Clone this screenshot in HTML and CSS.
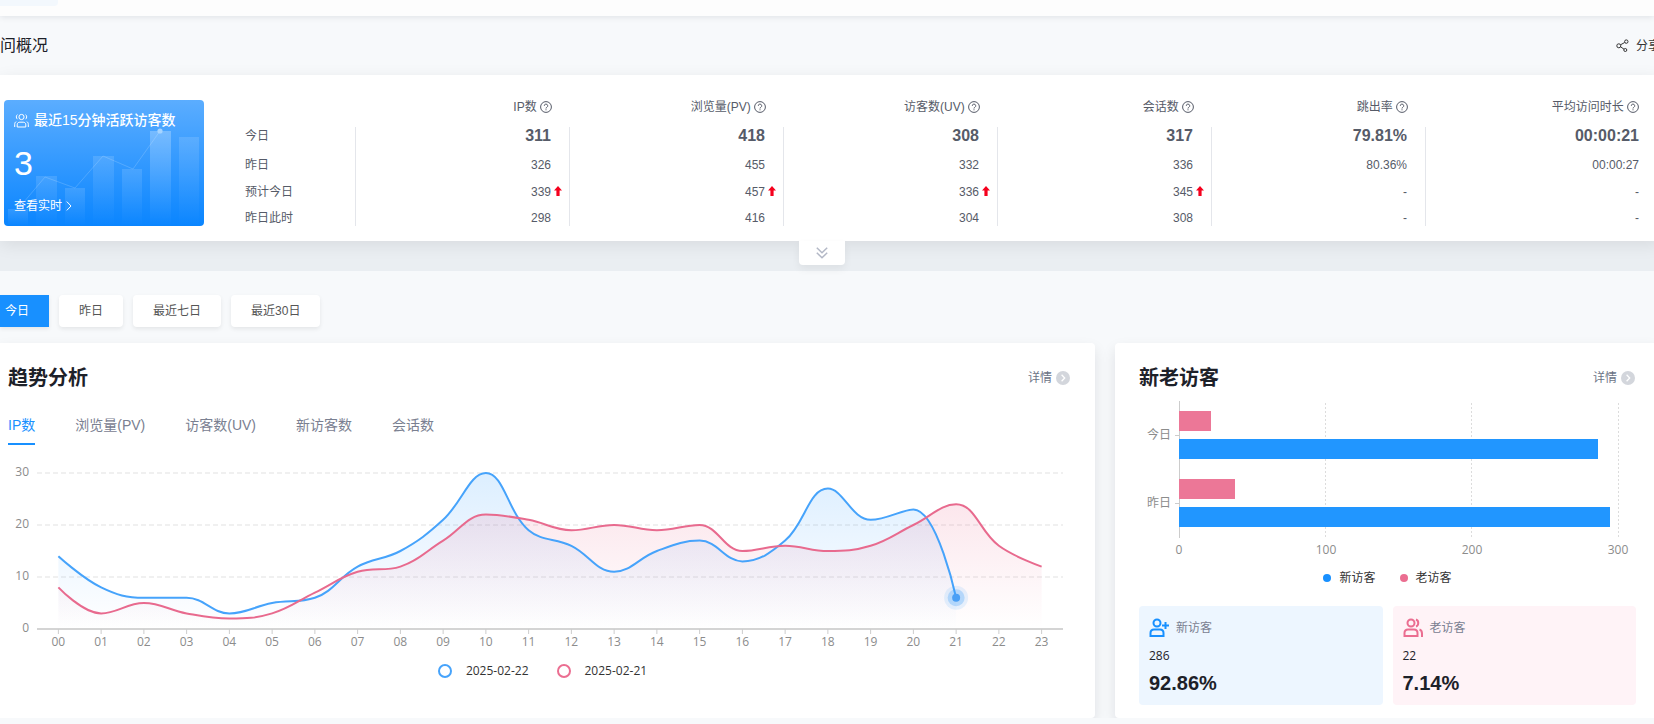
FILE: index.html
```html
<!DOCTYPE html>
<html lang="zh-CN">
<head>
<meta charset="utf-8">
<title>访问概况</title>
<link rel="stylesheet" href="styles.css">
</head>
<body>
<svg class="defs" aria-hidden="true">
  <symbol id="help" viewBox="0 0 12 12"><circle cx="6" cy="6" r="5.4" fill="none" stroke="currentColor"/><path d="M4.3 4.8a1.7 1.7 0 1 1 2.5 1.5c-.6.3-.8.6-.8 1.2M6 8.3v1" fill="none" stroke="currentColor"/></symbol>
  <symbol id="up" viewBox="0 0 8 10"><path d="M4 0l4 4.6H5.6V10H2.4V4.6H0z" fill="#f5001d"/></symbol>
  <symbol id="more" viewBox="0 0 14 14"><circle cx="7" cy="7" r="7" fill="#d3d6dc"/><path d="M5.6 3.8L8.700 7l-3.100 3.200" fill="none" stroke="#fff" stroke-width="1.3"/></symbol>
</svg>
<div class="topbar"><div class="topbar-tab"></div></div>
<div class="page">
  <header class="head">
    <h1>问概况</h1>
    <button class="share" type="button">
      <svg width="13" height="13" viewBox="0 0 13 13" fill="none" stroke="currentColor"><circle cx="2.8" cy="6.8" r="2"/><circle cx="10.3" cy="2.6" r="1.7"/><circle cx="9.3" cy="11" r="1.5"/><path d="M4.5 5.8l4.2-2.3M4.6 7.8l3.4 2.4"/></svg>
      <span>分享</span>
    </button>
  </header>
  <section class="summary">
    <div class="live">
      <svg class="live-bg" viewBox="0 0 200 126" preserveAspectRatio="none" aria-hidden="true">
        <defs><linearGradient id="lb" x1="0" y1="0" x2="0" y2="1"><stop offset="0" stop-color="#fff" stop-opacity=".13"/><stop offset="1" stop-color="#fff" stop-opacity="0"/></linearGradient>
        <linearGradient id="lb2" x1="0" y1="0" x2="0" y2="1"><stop offset="0" stop-color="#fff" stop-opacity=".26"/><stop offset="1" stop-color="#fff" stop-opacity="0"/></linearGradient></defs>
        <g fill="url(#lb)"><path d="M4 109h20v17H4z"/><path d="M32 76h21v50H32z"/><path d="M61 88h20v38H61z"/><path d="M89 56h21v70H89z"/><path d="M118 69h20v57h-20z"/><path d="M175 37h20v89h-20z"/></g>
        <path d="M146 31h21v95h-21z" fill="url(#lb2)"/>
        <path d="M14 109L41 77l30 11 28-32 30 13 27-38" fill="none" stroke="#fff" stroke-opacity=".17"/>
        <circle cx="156" cy="31" r="2.6" fill="#a6d4ff"/>
      </svg>
      <div class="live-title">
        <svg width="15" height="15" viewBox="0 0 15 15" fill="none" stroke="#fff" stroke-width="1"><circle cx="7.5" cy="4" r="2.6"/><path d="M3.2 14v-2.2c0-1.7 1-2.6 2.6-2.6h3.4c1.6 0 2.6.9 2.6 2.6V14zM3.4 1.6a3 3 0 0 0 0 4.6M11.6 1.6a3 3 0 0 1 0 4.6M.7 14v-2.6C.7 10 1.2 9 2.3 8.7M14.3 14v-2.6c0-1.4-.5-2.4-1.6-2.7"/></svg>
        <span>最近15分钟活跃访客数</span>
      </div>
      <div class="live-num">3</div>
      <a class="live-link" href="#">查看实时<svg width="6" height="10" viewBox="0 0 6 10" fill="none" stroke="#fff"><path d="M.8.6L5 5 .8 9.4"/></svg></a>
    </div>
    <table class="stats">
      <thead><tr><th scope="col"></th>
        <th scope="col">IP数 <svg class="help"><use href="#help"/></svg></th>
        <th scope="col">浏览量(PV) <svg class="help"><use href="#help"/></svg></th>
        <th scope="col">访客数(UV) <svg class="help"><use href="#help"/></svg></th>
        <th scope="col">会话数 <svg class="help"><use href="#help"/></svg></th>
        <th scope="col">跳出率 <svg class="help"><use href="#help"/></svg></th>
        <th scope="col">平均访问时长 <svg class="help"><use href="#help"/></svg></th></tr></thead>
      <tbody>
        <tr class="today"><th scope="row">今日</th><td>311</td><td>418</td><td>308</td><td>317</td><td>79.81%</td><td>00:00:21</td></tr>
        <tr><th scope="row">昨日</th><td>326</td><td>455</td><td>332</td><td>336</td><td>80.36%</td><td>00:00:27</td></tr>
        <tr><th scope="row">预计今日</th><td>339<svg class="up"><use href="#up"/></svg></td><td>457<svg class="up"><use href="#up"/></svg></td><td>336<svg class="up"><use href="#up"/></svg></td><td>345<svg class="up"><use href="#up"/></svg></td><td>-</td><td>-</td></tr>
        <tr class="last"><th scope="row">昨日此时</th><td>298</td><td>416</td><td>304</td><td>308</td><td>-</td><td>-</td></tr>
      </tbody>
    </table>
  </section>
  <div class="band">
    <button class="expand" type="button" aria-label="展开"><svg width="12" height="12" viewBox="0 0 12 12" fill="none" stroke="#b3b8c6" stroke-width="1.5"><path d="M.8.8L6 5.8 11.2.8M.8 5.8L6 10.8l5.2-5"/></svg></button>
  </div>
  <nav class="ranges">
    <button class="range active" type="button">今日</button>
    <button class="range" type="button">昨日</button>
    <button class="range" type="button">最近七日</button>
    <button class="range" type="button">最近30日</button>
  </nav>
  <main class="cards">
    <section class="card trend">
      <div class="card-head"><h2>趋势分析</h2><a class="more" href="#">详情<svg><use href="#more"/></svg></a></div>
      <div class="tabs">
        <button class="tab active" type="button">IP数</button>
        <button class="tab" type="button">浏览量(PV)</button>
        <button class="tab" type="button">访客数(UV)</button>
        <button class="tab" type="button">新访客数</button>
        <button class="tab" type="button">会话数</button>
      </div>
      <svg class="chart" id="trend" viewBox="0 0 1063 190" role="img" aria-label="趋势分析">
        <defs>
          <linearGradient id="ga" x1="0" y1="0" x2="0" y2="1"><stop offset="0" stop-color="#1890ff" stop-opacity=".15"/><stop offset="1" stop-color="#1890ff" stop-opacity="0"/></linearGradient>
          <linearGradient id="gb" x1="0" y1="0" x2="0" y2="1"><stop offset="0" stop-color="#eb6e91" stop-opacity=".17"/><stop offset="1" stop-color="#eb6e91" stop-opacity="0"/></linearGradient>
        </defs>
      </svg>
      <div class="legend dates">
        <span><i class="ring blue"></i>2025-02-22</span>
        <span><i class="ring pink"></i>2025-02-21</span>
      </div>
    </section>
    <section class="card visitors">
      <div class="card-head"><h2>新老访客</h2><a class="more" href="#">详情<svg><use href="#more"/></svg></a></div>
      <svg class="chart bars" viewBox="0 0 497 163" role="img" aria-label="新老访客">
        <g stroke="#dcdcdc" stroke-dasharray="2 2"><path d="M186.500 8v136M332.500 8v136M479.500 8v136"/></g>
        <path d="M40.500 6v137M36 40.500h5M36 108.500h5" stroke="#ccc" fill="none"/>
        <g fill="#ec7797"><path d="M40 16h32v20H40zM40 84h56v20H40z"/></g>
        <g fill="#2196ff"><path d="M40 44h419v20H40zM40 112h431v20H40z"/></g>
        <g class="axis"><text x="32" y="44" text-anchor="end">今日</text><text x="32" y="112" text-anchor="end">昨日</text></g>
        <g class="axis" text-anchor="middle"><text x="40" y="159">0</text><text x="187" y="159">100</text><text x="333" y="159">200</text><text x="479" y="159">300</text></g>
      </svg>
      <div class="legend kinds">
        <span><i class="dot blue"></i>新访客</span>
        <span><i class="dot pink"></i>老访客</span>
      </div>
      <div class="boxes">
        <div class="box new">
          <div class="box-title"><svg width="20" height="20" viewBox="0 0 20 20" fill="none" stroke="#1890ff" stroke-width="2"><circle cx="8" cy="5" r="3.5"/><path d="M1.500 18v-3c0-2.400 1.200-3.500 3.500-3.500h6c2.300 0 3.500 1.100 3.500 3.500v3zM16.500 4v7M13 7.500h7"/></svg>新访客</div>
          <div class="count">286</div><div class="pct">92.86%</div>
        </div>
        <div class="box old">
          <div class="box-title"><svg width="20" height="20" viewBox="0 0 20 20" fill="none" stroke="#eb6e91" stroke-width="2"><circle cx="8" cy="5" r="3.500"/><path d="M1.500 18v-3c0-2.400 1.200-3.500 3.500-3.500h6c2.300 0 3.500 1.100 3.500 3.500v3zM13 1.500c3 1 3 6 0 7M16.500 11.500c2 .6 2.500 2 2.500 4V19"/></svg>老访客</div>
          <div class="count">22</div><div class="pct">7.14%</div>
        </div>
      </div>
    </section>
  </main>
</div>
<script src="chart.js"></script>
</body>
</html>
```
FILE: styles.css
```css
* { box-sizing: border-box; }
body { margin: 0; background: #f7f9fb; color: #1d2129; font: 12px/18px "Liberation Sans", "Noto Sans CJK SC", sans-serif; overflow: hidden; }
h1, h2 { margin: 0; }
button { border: 0; padding: 0; background: none; font: inherit; color: inherit; }
a { color: inherit; text-decoration: none; }
.defs { position: absolute; width: 0; height: 0; }
.topbar { height: 16px; background: #fdfdfd; box-shadow: 0 1px 6px rgba(0, 21, 41, .1); }
.topbar-tab { width: 58px; height: 6px; background: #f3f8fd; border-radius: 0 0 4px 0; }
.page { margin-right: -6px; }
.head { display: flex; justify-content: space-between; align-items: center; height: 59px; }
.head h1 { font-size: 16px; font-weight: 400; line-height: 24px; }
.share { display: flex; align-items: center; gap: 7px; color: #333; white-space: nowrap; }
.summary { position: relative; display: flex; padding: 25px 20px 15px 4px; background: #fff; box-shadow: 0 4px 16px rgba(0, 0, 0, .08); }
.live { position: relative; flex: none; width: 200px; height: 126px; padding: 10px; border-radius: 4px; background: linear-gradient(#5badff, #0a85ff); color: #fff; overflow: hidden; }
.live-bg { position: absolute; inset: 0; width: 100%; height: 100%; }
.live-title { position: relative; display: flex; align-items: center; gap: 5px; font-size: 14px; font-weight: 500; line-height: 20px; white-space: nowrap; }
.live-num { position: relative; margin: 13px 0; font-size: 34px; line-height: 40px; }
.live-link { position: relative; display: flex; align-items: center; gap: 4px; line-height: 20px; }
.stats { flex: 1; width: 100%; min-width: 0; margin-left: 41px; border-collapse: separate; border-spacing: 0; table-layout: fixed; color: #565b68; line-height: 16px; }
.stats th { font-weight: 400; text-align: left; }
.stats th, .stats td { position: relative; height: 27px; padding: 0; vertical-align: middle; }
.stats tr > :first-child { width: 111px; }
.stats thead th { padding: 0 18px 13px 0; line-height: 12px; text-align: right; white-space: nowrap; }
.stats td { padding-right: 18px; text-align: right; }
.stats tbody tr > * { border-right: 1px solid #e4e6eb; }
.stats tbody tr > :last-child { border-right: 0; padding-right: 1px; }
.stats thead tr > :last-child { padding-right: 1px; }
.stats .today > * { height: 24px; padding-bottom: 6px; }
.stats .today td { font-size: 16px; font-weight: 700; }
.stats .last > * { height: 21px; padding-top: 5px; }
.help { width: 12px; height: 12px; vertical-align: -2px; }
.up { position: absolute; right: 7px; top: 8px; width: 8px; height: 10px; }
.band { display: flex; justify-content: center; height: 30px; background: #eaeef2; }
.expand { position: relative; display: flex; align-items: center; justify-content: center; width: 46px; height: 24px; margin-right: 16px; background: #fff; border-radius: 0 0 4px 4px; box-shadow: 0 4px 8px rgba(0, 0, 0, .06); }
.ranges { display: flex; gap: 10px; padding: 24px 0 16px; }
.range { height: 32px; padding: 0 20px; background: #fff; border-radius: 4px; color: #555; box-shadow: 0 2px 4px rgba(0, 0, 0, .08); }
.range.active { padding-left: 5px; border-radius: 0; background: #1890ff; color: #fff; }
.cards { display: grid; grid-template-columns: minmax(0, 1fr) minmax(0, 545px); gap: 20px; }
.card { background: #fff; border-radius: 4px; box-shadow: 0 6px 14px rgba(0, 20, 30, .1); padding: 20px 24px 13px; }
.trend { padding-left: 8px; border-radius: 0 4px 4px 0; }
.card-head { display: flex; justify-content: space-between; align-items: center; height: 30px; }
.card-head h2 { font-size: 20px; line-height: 30px; font-weight: 700; }
.more { display: flex; align-items: center; gap: 4px; padding-right: 1px; color: #6b7385; }
.more svg { width: 14px; height: 14px; }
.tabs { display: flex; gap: 40px; margin-top: 22px; }
.tab { height: 30px; padding-bottom: 7px; border-bottom: 2px solid transparent; color: #7a8091; font-size: 14px; line-height: 21px; }
.tab.active { border-color: #1890ff; color: #1890ff; }
.chart { display: block; width: 100%; height: auto; overflow: visible; }
.trend .chart { margin-top: 18px; }
.axis text { font: 12px "Open Sans", "Noto Sans CJK SC", sans-serif; fill: #8c8c8c; }
.legend { display: flex; justify-content: center; color: #333; font-family: "Open Sans", "Noto Sans CJK SC", sans-serif; line-height: 18px; }
.legend span { display: flex; align-items: center; }
.dates { gap: 28px; margin: 9px 0 0 6px; }
.dates span { gap: 14px; }
.ring { width: 14px; height: 14px; border: 2px solid; border-radius: 50%; }
.ring.blue { border-color: #46a3fb; }
.ring.pink { border-color: #eb6e91; }
.bars { margin-top: 2px; }
.kinds { gap: 24px; margin: 11px 0 19px; }
.kinds span { gap: 8px; }
.dot { width: 8px; height: 8px; border-radius: 50%; }
.dot.blue { background: #1890ff; }
.dot.pink { background: #eb6e91; }
.boxes { display: grid; grid-template-columns: 1fr 1fr; gap: 10px; }
.box { padding: 12px 10px; height: 99px; border-radius: 4px; }
.new { background: #edf6ff; }
.old { background: #fff3f7; }
.box-title { display: flex; align-items: center; gap: 7px; height: 20px; color: #7a8091; }
.count { margin-top: 9px; font-family: "Open Sans", sans-serif; }
.pct { margin-top: 5px; font-size: 20px; line-height: 26px; font-weight: 700; }
```
FILE: chart.js
```js
const NS = "http://www.w3.org/2000/svg";
const svg = document.getElementById("trend");
const today = [14,8,6,6,3,5,6,12,15,21,30,19,16,11,15,17,13,17,27,21,23,6];
const yesterday = [8,3,5,3,2,3,7,11,12,17,22,21,19,20,19,20,15,16,15,16,20,24,16,12];
const left = 29, right = 1055, base = 166, unit = 5.2, tension = 0.4;
const step = (right - left) / 24;

function add(parent, name, attrs, text) {
  const el = document.createElementNS(NS, name);
  for (const k in attrs) el.setAttribute(k, attrs[k]);
  if (text !== undefined) el.textContent = text;
  parent.appendChild(el);
  return el;
}
const px = i => left + step * (i + 0.5);
const py = v => base - v * unit;
const clamp = (v, a, b) => Math.max(Math.min(v, Math.max(a, b)), Math.min(a, b));

function smooth(values) {
  const p = values.map((v, i) => [px(i), py(v)]);
  let d = `M${p[0]}`, c0 = p[0];
  for (let i = 1; i < p.length; i++) {
    const cur = p[i], prev = p[i - 1], next = p[i + 1];
    let c1 = cur, n0 = cur;
    if (next) {
      const lp = Math.hypot(cur[0] - prev[0], cur[1] - prev[1]);
      const ln = Math.hypot(next[0] - cur[0], next[1] - cur[1]);
      n0 = cur.map((c, k) => clamp(c + (next[k] - prev[k]) * tension * ln / (lp + ln), next[k], c));
      c1 = cur.map((c, k) => clamp(c - (n0[k] - c) * lp / ln, prev[k], c));
      n0 = cur.map((c, k) => c + (c - c1[k]) * ln / lp);
    }
    d += `C${c0} ${c1} ${cur}`;
    c0 = n0;
  }
  return d;
}

const axis = add(svg, "g", { class: "axis" });
for (const v of [0, 10, 20, 30]) {
  add(axis, "text", { x: 21, y: py(v) + 3, "text-anchor": "end" }, v);
  if (v) add(svg, "path", { d: `M${left} ${py(v)}H${right}`, stroke: "#f0f0f0", "stroke-width": 2, "stroke-dasharray": "5 3" });
}
for (const [values, fill] of [[today, "ga"], [yesterday, "gb"]]) {
  add(svg, "path", { d: `${smooth(values)}V${base}H${px(0)}Z`, fill: `url(#${fill})` });
}
add(svg, "path", { d: `M${left} ${base}H${right}`, stroke: "#d4d4d4", "stroke-width": 2 });
for (let i = 0; i < 24; i++) {
  add(svg, "path", { d: `M${px(i)} ${base}v5`, stroke: "#ccc" });
  add(axis, "text", { x: px(i), y: 183, "text-anchor": "middle" }, String(i).padStart(2, "0"));
}
add(svg, "path", { d: smooth(today), fill: "none", stroke: "#46a3fb", "stroke-width": 2 });
add(svg, "path", { d: smooth(yesterday), fill: "none", stroke: "#e86a8e", "stroke-width": 2 });
const end = { cx: px(21), cy: py(6) };
add(svg, "circle", { ...end, r: 12, fill: "#1890ff", "fill-opacity": 0.1 });
add(svg, "circle", { ...end, r: 8.5, fill: "#46a3fb", "fill-opacity": 0.3 });
add(svg, "circle", { ...end, r: 4, fill: "#4a9ff5" });
```
